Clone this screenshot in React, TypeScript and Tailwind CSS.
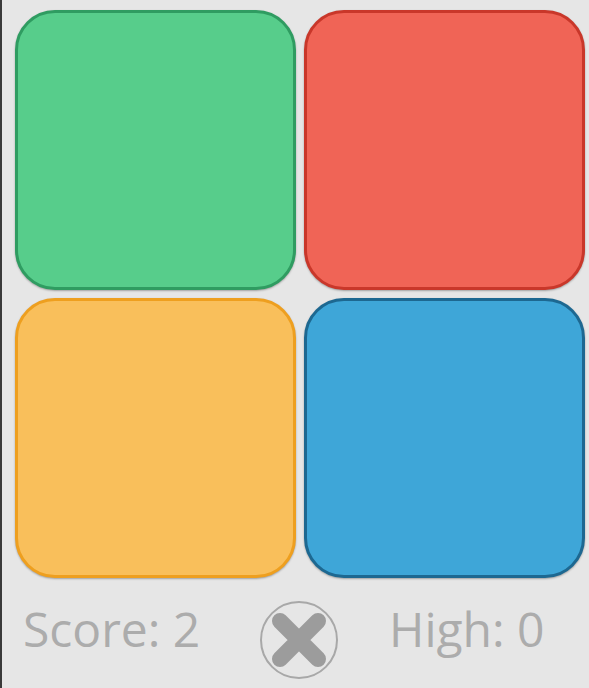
import React from "react";

const tiles = [
  { fill: "bg-[#57cd8b]", border: "border-[#2f9c61]" },
  { fill: "bg-[#f06456]", border: "border-[#c9372a]" },
  { fill: "bg-[#f9bf5b]", border: "border-[#ee9f1f]" },
  { fill: "bg-[#3ea6d8]", border: "border-[#1d6891]" },
];

export default function App() {
  return (
    <div
      className="w-[589px] h-[688px] bg-[#e6e6e6] border-l-2 border-[#3a3a3a] flex flex-col"
      style={{ fontFamily: '"Open Sans", "Noto Sans", sans-serif' }}
    >
      <div className="grid grid-cols-[281px_281px] gap-[8px] pl-[13px] pt-[10px]">
        {tiles.map((t, i) => (
          <div
            key={i}
            className={`h-[280px] rounded-[40px] border-[3px] ${t.fill} ${t.border} shadow-[0_1px_2px_rgba(0,0,0,0.3)]`}
          />
        ))}
      </div>
      <div className="flex items-start pl-[21px] pt-[22px]">
        <span className="w-[236px] mt-[5px] text-[48px] leading-none text-[#acacac]">Score: 2</span>
        <svg width="80" height="80" viewBox="0 0 80 80" className="shrink-0">
          <circle cx="40" cy="40" r="38" fill="none" stroke="#a8a8a8" strokeWidth="2" />
          <path d="M21 21 L59 59 M59 21 L21 59" stroke="#9c9c9c" strokeWidth="16" strokeLinecap="round" />
        </svg>
        <span className="ml-[50px] mt-[5px] text-[48px] leading-none text-[#acacac]">High: 0</span>
      </div>
    </div>
  );
}
